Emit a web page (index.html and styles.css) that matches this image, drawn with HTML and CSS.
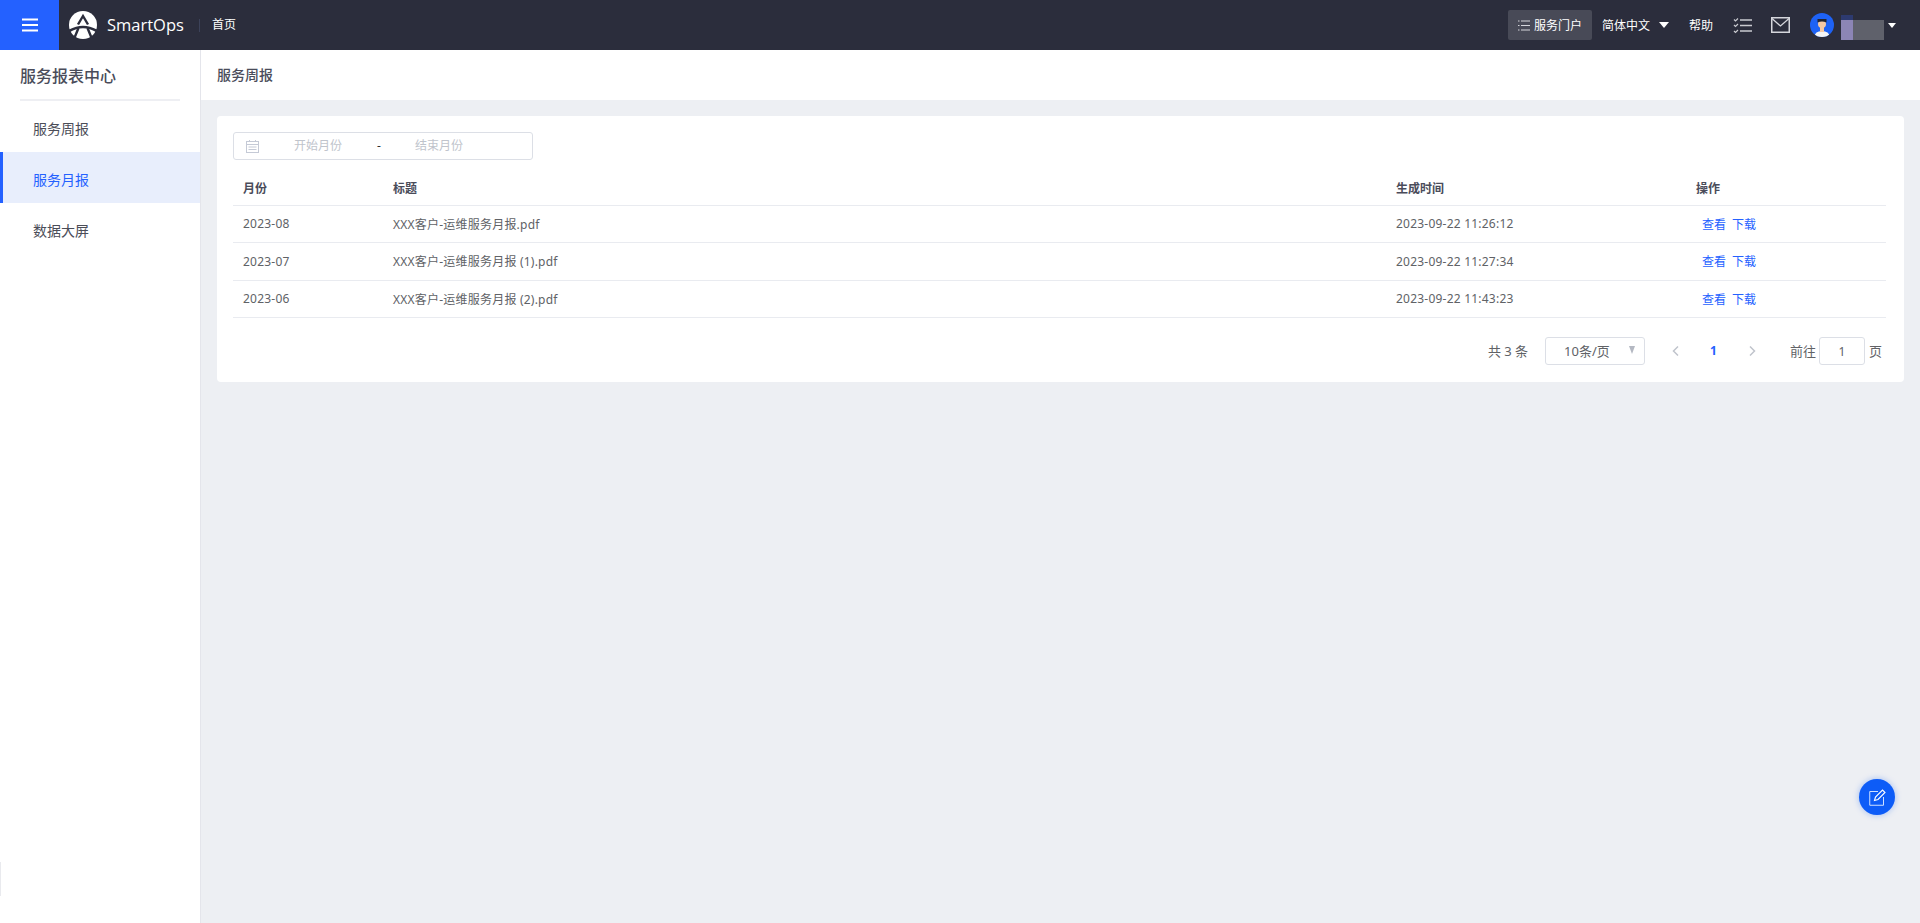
FILE: index.html
```html
<!DOCTYPE html>
<html lang="zh-CN">
<head>
<meta charset="utf-8">
<title>SmartOps</title>
<link rel="stylesheet" href="styles.css">
</head>
<body>
<header class="topbar">
  <button class="menu-btn" aria-label="菜单">
    <svg width="16" height="14" viewBox="0 0 16 14"><path d="M0 1.500h16M0 7h16M0 12.500h16" stroke="#fff" stroke-width="2"/></svg>
  </button>
  <div class="brand">
    <svg class="logo" width="28" height="28" viewBox="0 0 28 28">
      <circle cx="14" cy="14" r="14" fill="#fff"/>
      <path d="M9 13.500 14 5l5 8.500" fill="none" stroke="#2b2d3c" stroke-width="2.400"/>
      <path d="M0 20Q14 12 28 20" fill="none" stroke="#2b2d3c" stroke-width="2.600"/>
      <path d="M5 28 9.500 17M23 28 18.500 17" stroke="#2b2d3c" stroke-width="2.400"/>
    </svg>
    <span class="brand-name">SmartOps</span>
    <span class="brand-sep"></span>
    <span class="crumb">首页</span>
  </div>
  <div class="top-actions">
    <a class="portal">
      <svg width="12" height="11" viewBox="0 0 12 11"><path d="M3 1h9M3 5.500h9M3 10h9M0 1h1.500M0 5.500h1.500M0 10h1.500" stroke="#d5d6dc" stroke-width="1"/></svg>
      <span>服务门户</span>
    </a>
    <a class="lang">简体中文<i class="caret-lg"></i></a>
    <a class="help">帮助</a>
    <svg class="todo" width="19" height="17" viewBox="0 0 19 17"><path d="M7 3h12M7 8.500h12M7 14h12" stroke="#c9cad0" stroke-width="1.500"/><path d="M1 2.500 2.500 4 5 1.500M1 8 2.500 9.500 5 7M1 14 2.500 15.500 5 13" fill="none" stroke="#c9cad0" stroke-width="1.200"/></svg>
    <svg class="mail" width="19" height="16" viewBox="0 0 19 16"><rect x=".75" y=".75" width="17.500" height="14.500" fill="none" stroke="#d5d6dc" stroke-width="1.500"/><path d="M1 1.500 9.500 9 18 1.500" fill="none" stroke="#d5d6dc" stroke-width="1.300"/></svg>
    <div class="user">
      <svg class="avatar" width="24" height="24" viewBox="0 0 24 24">
        <defs><clipPath id="av"><circle cx="12" cy="12" r="12"/></clipPath></defs>
        <g clip-path="url(#av)">
          <rect width="24" height="24" fill="#1e62f5"/>
          <path d="M4 24q1-6 8-6t8 6z" fill="#f4f4f4"/>
          <rect x="10" y="13" width="4" height="6" fill="#f6c9a4"/>
          <circle cx="12" cy="11" r="4" fill="#f6c9a4"/>
          <path d="M7.500 9.500V6h9v3.500q-4.500-2-9 0z" fill="#23252f"/>
        </g>
      </svg>
      <span class="name-mask"><span class="mask-top"></span><span class="mask-left"></span></span>
      <i class="caret-sm"></i>
    </div>
  </div>
</header>
<div class="layout">
  <aside class="sidebar">
    <h2 class="side-title">服务报表中心</h2>
    <nav class="side-nav">
      <a class="side-item">服务周报</a>
      <a class="side-item active">服务月报</a>
      <a class="side-item">数据大屏</a>
    </nav>
    <span class="side-mark"></span>
  </aside>
  <main class="content">
    <div class="page-head">服务周报</div>
    <section class="card">
      <div class="range">
        <svg width="13" height="13" viewBox="0 0 13 13"><rect x=".5" y="1.500" width="12" height="11" fill="none" stroke="#c5cad6"/><path d="M0 4.500h13M2.500 7h8M2.500 9.500h8M3.500 0v2M9.500 0v2" stroke="#c5cad6"/></svg>
        <span class="range-text">开始月份</span>
        <span class="range-sep">-</span>
        <span class="range-text">结束月份</span>
      </div>
      <table class="table">
        <colgroup><col class="c-month"><col class="c-title"><col class="c-time"><col class="c-op"></colgroup>
        <thead><tr><th>月份</th><th>标题</th><th>生成时间</th><th>操作</th></tr></thead>
        <tbody>
          <tr><td>2023-08</td><td>XXX客户-运维服务月报.pdf</td><td>2023-09-22 11:26:12</td><td class="ops"><a>查看</a><a>下载</a></td></tr>
          <tr><td>2023-07</td><td>XXX客户-运维服务月报 (1).pdf</td><td>2023-09-22 11:27:34</td><td class="ops"><a>查看</a><a>下载</a></td></tr>
          <tr><td>2023-06</td><td>XXX客户-运维服务月报 (2).pdf</td><td>2023-09-22 11:43:23</td><td class="ops"><a>查看</a><a>下载</a></td></tr>
        </tbody>
      </table>
      <div class="pager">
        <span class="total">共 3 条</span>
        <div class="size-select"><span>10条/页</span><i class="caret-gray"></i></div>
        <svg class="pg-arrow" width="7" height="10" viewBox="0 0 7 10"><path d="M6 .5 1.500 5 6 9.500" fill="none" stroke="#c0c4cc" stroke-width="1.500"/></svg>
        <span class="pg-num">1</span>
        <svg class="pg-arrow" width="7" height="10" viewBox="0 0 7 10"><path d="M1 .5 5.500 5 1 9.500" fill="none" stroke="#c0c4cc" stroke-width="1.500"/></svg>
        <span class="goto">前往</span>
        <div class="pg-input">1</div>
        <span class="goto-end">页</span>
      </div>
    </section>
  </main>
</div>
<button class="fab" aria-label="反馈">
  <svg width="17" height="17" viewBox="0 0 17 17"><path d="M9 2.500H.75v13.750H14.500V8" fill="none" stroke="#cfe0ff" stroke-width="1"/><path d="M5.500 11.500l1-3.500L13.500 1l2.500 2.500L9 10.500z" fill="none" stroke="#fff" stroke-width="1.100"/></svg>
</button>
</body>
</html>
```
FILE: styles.css
```css
* { box-sizing: border-box; }
html, body { margin: 0; height: 100%; overflow: hidden; }
body {
  font-family: "Noto Sans", "Noto Sans CJK SC", sans-serif;
  font-size: 12px;
  color: #606266;
  background: #edeff3;
}
a { color: inherit; text-decoration: none; }
i { display: block; }

.topbar { height: 50px; display: flex; align-items: center; background: #2b2d3c; color: #fff; }
.menu-btn { width: 59px; height: 50px; display: flex; align-items: center; justify-content: center; border: 0; padding: 0; background: #2461ff; }
.brand { display: flex; align-items: center; margin-left: 10px; }
.logo { display: block; }
.brand-name { margin-left: 10px; font-family: "Open Sans", sans-serif; font-size: 16.500px; line-height: 24px; }
.brand-sep { width: 1px; height: 13px; margin: 0 12px 0 15px; background: #3c4259; }
.crumb { line-height: 16px; }

.top-actions { margin-left: auto; display: flex; align-items: center; height: 50px; }
.portal { width: 84px; height: 30px; margin-right: 10px; display: flex; align-items: center; gap: 4px; padding-left: 10px; border-radius: 2px; background: #484a57; }
.lang { display: flex; align-items: center; }
.caret-lg { width: 0; height: 0; margin: 0 20px 0 9px; border: 5.500px solid transparent; border-bottom: 0; border-top: 6px solid #fff; }
.help { margin-right: 20px; }
.todo { margin-right: 19px; }
.mail { margin-right: 20px; }
.user { position: relative; width: 110px; height: 50px; display: flex; align-items: center; }
.avatar { display: block; }
.name-mask { position: absolute; left: 31px; top: 20px; width: 43px; height: 20px; background: #5f616b; }
.mask-top { position: absolute; left: 0; top: -5px; width: 12px; height: 5px; background: #2d3a70; }
.mask-left { position: absolute; left: 0; top: 0; width: 12px; height: 20px; background: #8c85b5; }
.caret-sm { position: absolute; left: 78px; top: 23px; width: 0; height: 0; border: 4px solid transparent; border-bottom: 0; border-top: 5px solid #fff; }

.layout { height: 873px; display: flex; }
.sidebar { position: relative; width: 201px; flex: none; padding-top: 1px; background: #fff; border-right: 1px solid #e4e5eb; }
.side-title { height: 50px; margin: 0 20px; border-bottom: 2px solid #eeeff3; font-size: 16px; font-weight: 500; line-height: 50px; color: #4a4c5a; }
.side-item { height: 51px; display: flex; align-items: center; padding: 2px 0 0 33px; font-size: 14px; color: #4b4d58; }
.side-item.active { padding-left: 30px; border-left: 3px solid #2461ff; background: #e8eefc; color: #2461ff; }
.side-mark { position: absolute; left: 0; top: 812px; width: 1px; height: 34px; background: #e9eaee; }

.content { flex: 1; min-width: 0; padding-bottom: 16px; }
.page-head { height: 50px; padding: 0 0 0 16px; background: #fff; font-size: 14px; font-weight: 500; line-height: 49px; color: #4a4c5a; }
.card { margin: 16px 16px 0; height: 266px; padding: 16px 18px 0 16px; border-radius: 4px; background: #fff; }

.range { width: 300px; height: 28px; display: flex; align-items: center; padding: 0 0 2px 12px; border: 1px solid #dcdfe6; border-radius: 3px; }
.range svg { flex: none; margin-top: 2px; }
.range-text { width: 48px; color: #c0c4cc; white-space: nowrap; }
.range svg + .range-text { margin-left: 35px; }
.range-sep { width: 12px; margin: 0 30px 0 31px; text-align: center; color: #303133; }

.table { width: 100%; margin-top: 6px; border-collapse: collapse; table-layout: fixed; }
.c-month { width: 150px; }
.c-time { width: 300px; }
.c-op { width: 200px; }
.table th, .table td { padding: 0 10px; border-bottom: 1px solid #e9ebf0; text-align: left; font-size: 12px; }
.table th { height: 39px; padding-top: 6px; font-weight: 700; color: #4a4c5a; }
.table td { height: 37.500px; letter-spacing: .22px; color: #606266; }
.table td.ops { padding-left: 16px; letter-spacing: 0; color: #2461ff; }
.ops a { margin-right: 6px; }

.pager { height: 28px; margin-top: 19px; display: flex; align-items: center; justify-content: flex-end; padding-right: 4px; font-size: 13px; }
.pager > span { position: relative; top: -1px; }
.total { margin-right: 17px; }
.size-select { width: 100px; height: 28px; display: flex; align-items: center; justify-content: space-between; padding: 0 9px 2px 18px; border: 1px solid #dcdfe6; border-radius: 3px; }
.caret-gray { width: 0; height: 0; border: 3.500px solid transparent; border-bottom: 0; border-top: 8px solid #b4b8c2; }
.pg-arrow { display: block; margin-left: 27px; }
.pg-num { margin-left: 31px; margin-right: 5px; font-size: 12px; font-weight: 700; color: #2461ff; }
.pg-num + .pg-arrow { margin-left: 27px; }
.goto { margin-left: 34px; margin-right: 3px; }
.pg-input { width: 46px; height: 28px; display: flex; align-items: center; justify-content: center; font-size: 12px; border: 1px solid #dcdfe6; border-radius: 3px; }
.goto-end { margin-left: 4px; }

.fab { position: fixed; left: 1859px; top: 779px; width: 36px; height: 36px; display: flex; align-items: center; justify-content: center; padding: 0; border: 0; border-radius: 50%; background: #0d5cf7; box-shadow: 0 0 6px rgba(13, 92, 247, .35); }
```
